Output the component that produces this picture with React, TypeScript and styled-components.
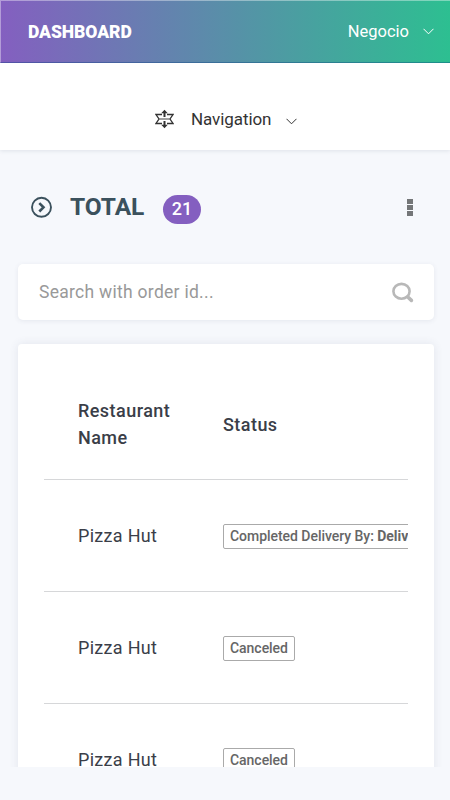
import React from "react";
import styled, { createGlobalStyle } from "styled-components";

const GlobalStyle = createGlobalStyle`
  * { box-sizing: border-box; }
  body {
    margin: 0;
    background: #f6f8fc;
    font-family: Roboto, "Liberation Sans", sans-serif;
    color: #3a3e48;
    overflow: hidden;
  }
`;

const Page = styled.div`
  height: 800px;
  display: flex;
  flex-direction: column;
  overflow: hidden;
`;

const TopBar = styled.header`
  height: 63px;
  flex: none;
  display: flex;
  align-items: center;
  justify-content: space-between;
  padding: 0 16px 0 27px;
  border-top: 1px solid rgba(255, 255, 255, 0.38);
  border-left: 1px solid rgba(255, 255, 255, 0.38);
  border-bottom: 1px solid rgba(0, 60, 130, 0.35);
  background: linear-gradient(90deg, #845fc0, #2dbf91) border-box;
  color: #fff;
`;

const Brand = styled.span`
  font-size: 17.5px;
  font-weight: 900;
  line-height: 24px;
  letter-spacing: -0.05px;
`;

const UserMenu = styled.div`
  display: flex;
  align-items: center;
  gap: 14px;
  font-size: 16.5px;
  line-height: 24px;
  letter-spacing: 0;
`;

const NavBar = styled.nav`
  height: 87px;
  flex: none;
  padding: 44px 0 0 155px;
  display: flex;
  align-items: flex-start;
  background: #fff;
  box-shadow: 0 1px 4px rgba(60, 70, 100, 0.12);
  color: #333;
  svg { flex: none; }
`;

const NavLabel = styled.span`
  margin: 0 15px 0 17px;
  font-size: 17px;
  line-height: 24px;
  letter-spacing: -0.08px;
`;

const NavArrow = styled.span`
  display: flex;
  padding-top: 11px;
`;

const NavGlyph = styled.span`
  display: flex;
  padding-top: 2px;
`;

const TitleRow = styled.div`
  height: 114px;
  flex: none;
  display: flex;
  align-items: center;
  padding: 0 37px 0 30px;
  color: #3b515d;
`;

const Title = styled.h1`
  width: 75px;
  margin: 0 18px;
  font-size: 24.5px;
  font-weight: 700;
  line-height: 30px;
  letter-spacing: -0.05px;
`;

const Count = styled.span`
  width: 38px;
  height: 29px;
  margin-top: 4px;
  border-radius: 15px;
  background: #845fc0;
  color: #fff;
  font-size: 18px;
  font-weight: 500;
  line-height: 28px;
  text-align: center;
`;

const More = styled.div`
  margin-left: auto;
  display: flex;
  flex-direction: column;
  gap: 1px;
`;

const MoreDot = styled.i`
  width: 6px;
  height: 5px;
  background: #747678;
`;

const SearchBox = styled.div`
  height: 56px;
  flex: none;
  margin: 0 16px 24px 18px;
  padding: 0 20px 0 21px;
  display: flex;
  align-items: center;
  justify-content: space-between;
  background: #fff;
  border-radius: 5px;
  box-shadow: 0 1px 5px rgba(60, 70, 100, 0.09);
  color: #999;
  font-size: 17.5px;
  letter-spacing: 0.28px;
`;

const CardViewport = styled.div`
  height: 423px;
  margin-top: -8px;
  padding: 8px 16px 0 18px;
  flex: none;
  box-sizing: content-box;
  overflow: hidden;
`;

const Card = styled.section`
  height: 500px;
  padding: 24px 26px;
  background: #fff;
  border-radius: 4px;
  box-shadow: 0 0 10px rgba(60, 70, 110, 0.11);
`;

const Table = styled.div`
  overflow: hidden;
`;

const Row = styled.div<{ $head?: boolean }>`
  display: grid;
  grid-template-columns: 111px max-content;
  column-gap: 34px;
  align-items: center;
  height: 112px;
  padding: ${(p) => (p.$head ? "1px 0 0 34px" : "0 0 1px 34px")};
  border-bottom: 1px solid #d6d7d9;
  font-size: 18px;
  font-weight: ${(p) => (p.$head ? 500 : 400)};
  line-height: 27px;
  letter-spacing: ${(p) => (p.$head ? "0.45px" : "0.3px")};
`;

const Status = styled.span`
  height: 25px;
  margin-top: 2px;
  padding: 0 6.5px 0 6px;
  border: 1px solid #aaa;
  border-radius: 2px;
  color: #666;
  font-size: 14px;
  font-weight: 500;
  line-height: 23px;
  letter-spacing: -0.04px;
  white-space: nowrap;
  justify-self: start;
  b { font-weight: 700; }
`;

const Chevron = () => (
  <svg width="11" height="7" viewBox="0 0 11 7" fill="none" stroke="currentColor" strokeWidth="1">
    <path d="M.5.8 5.5 5.8 10.5.8" />
  </svg>
);

const NavIcon = () => (
  <svg width="19" height="20" viewBox="0 0 19 20" fill="none" stroke="currentColor" strokeWidth="1.3">
    <path d="M7 5.5H1L4 10l-3 4.5h6M12 5.5h6L15 10l3 4.5h-6" />
    <path d="M4 10h11" stroke="#777" strokeWidth="1.4" />
    <path d="M9.5 3v5M9.5 12v5" strokeWidth="2" />
    <path d="M9.5.8 6.2 4.2h6.6ZM9.5 19.2l-3.3-3.4h6.6Z" fill="currentColor" stroke="none" />
  </svg>
);

const CircleArrow = () => (
  <svg width="22" height="22" viewBox="0 0 22 22" fill="none" stroke="currentColor">
    <circle cx="11.5" cy="11.3" r="9.5" strokeWidth="1.9" />
    <path d="m9.3 7.1 4.2 4.2-4.2 4.2" strokeWidth="2.6" />
  </svg>
);

const SearchIcon = () => (
  <svg width="22" height="21" viewBox="0 0 22 21" fill="none" stroke="#b8b8b8">
    <ellipse cx="9.5" cy="9.3" rx="8.1" ry="7.4" strokeWidth="2.6" />
    <path d="m15.8 15 3.6 3.4" strokeWidth="3.6" strokeLinecap="round" />
  </svg>
);

const orders = [
  { restaurant: "Pizza Hut", status: "Completed Delivery By: ", courier: "Delivery" },
  { restaurant: "Pizza Hut", status: "Canceled" },
  { restaurant: "Pizza Hut", status: "Canceled" },
];

export default function App() {
  return (
    <Page>
      <GlobalStyle />
      <TopBar>
        <Brand>DASHBOARD</Brand>
        <UserMenu>Negocio <Chevron /></UserMenu>
      </TopBar>
      <NavBar>
        <NavGlyph><NavIcon /></NavGlyph>
        <NavLabel>Navigation</NavLabel>
        <NavArrow><Chevron /></NavArrow>
      </NavBar>
      <TitleRow>
        <CircleArrow />
        <Title>TOTAL</Title>
        <Count>21</Count>
        <More><MoreDot /><MoreDot /><MoreDot /></More>
      </TitleRow>
      <SearchBox>
        <span>Search with order id...</span>
        <SearchIcon />
      </SearchBox>
      <CardViewport>
        <Card>
          <Table>
            <Row $head><span>Restaurant Name</span><span>Status</span></Row>
            {orders.map((order, i) => (
              <Row key={i}>
                <span>{order.restaurant}</span>
                <Status>{order.status}{order.courier && <b>{order.courier}</b>}</Status>
              </Row>
            ))}
          </Table>
        </Card>
      </CardViewport>
    </Page>
  );
}
